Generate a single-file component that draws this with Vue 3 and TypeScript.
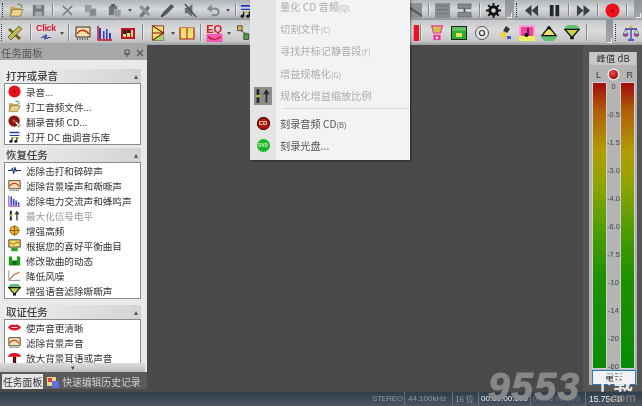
<script setup lang="ts">
type Tool = { k: string; w: number; icon?: string; label?: string };

const i = (icon: string, w = 23, label?: string): Tool => ({ k: "btn", w, icon, label });
const sep = (w = 6): Tool => ({ k: "sep", w });
const dd = (w = 7): Tool => ({ k: "dd", w });
const grip = (w = 5): Tool => ({ k: "grip", w });
const tail = (w = 8): Tool => ({ k: "tail", w });
const gap = (w: number): Tool => ({ k: "gap", w });

const toolbars: Tool[][][] = [
  [
    [
      grip(5), i("open", 22), i("save"), sep(5), i("cut", 24), i("copy"), i("paste", 25), dd(6),
      i("tool"), i("pen"), i("mute"), i("undo", 22), dd(8), sep(6), i("list", 17),
    ],
    [
      i("clip", 12), gap(5), sep(6), gap(3), i("panel1", 17), gap(5), i("panel2", 17), gap(3), sep(6), i("gear", 22),
      gap(1), tail(9), grip(5), i("rew", 25), i("pause", 21), sep(7), i("ff", 22), sep(7), i("rec", 22),
      sep(7), gap(4), tail(8),
    ],
  ],
  [
    [
      grip(4), i("wand", 22), sep(8), i("click", 24, "Click"), dd(7), sep(7), i("noise", 22), i("bars", 22), i("bars2", 23),
      sep(7), i("fold", 23), dd(8), i("fold2", 20), sep(6), i("eq", 22, "EQ"), dd(7), i("chain", 21),
    ],
    [
      i("redbar", 6), sep(12), i("blender", 22), i("image", 22), i("disc", 23), i("brush", 23), i("music", 22),
      i("up", 22), i("down", 23), sep(6), gap(17), tail(7), grip(5), gap(2), i("scale", 22),
    ],
  ],
];

const sections = [
  { title: "打开或录音", rows: [
    { icon: "rec", text: "录音..." },
    { icon: "open", text: "打工音频文件..." },
    { icon: "rip", text: "翻录音频 CD..." },
    { icon: "list", text: "打开 DC 曲调音乐库" },
  ] },
  { title: "恢复任务", rows: [
    { icon: "tick", text: "滤除击打和碎碎声" },
    { icon: "noise", text: "滤除背景噪声和嘶嘶声" },
    { icon: "hum", text: "滤除电力交流声和蜂鸣声" },
    { icon: "max", text: "最大化信号电平", off: true },
    { icon: "high", text: "增强高频" },
    { icon: "match", text: "根据您的喜好平衡曲目" },
    { icon: "dyn", text: "修改歌曲的动态" },
    { icon: "wind", text: "降低风噪" },
    { icon: "down", text: "增强语音滤除嘶嘶声" },
  ] },
  { title: "取证任务", rows: [
    { icon: "lips", text: "使声音更清晰" },
    { icon: "noise", text: "滤除背景声音" },
    { icon: "shroom", text: "放大背景耳语或声音" },
  ] },
];

const menu = [
  { text: "量化 CD 音频", key: "(Q)", off: true },
  { text: "切割文件", key: "(C)", off: true },
  { text: "寻找并标记静音段", key: "(F)", off: true },
  { text: "增益规格化", key: "(G)", off: true },
  { text: "规格化增益缩放比例", key: "", off: true, icon: "max" },
  { sep: true, text: "", key: "" },
  { text: "刻录音频 CD", key: "(B)", badge: "CD" },
  { text: "刻录光盘...", key: "", badge: "DVD" },
];

const scale = ["0", "-0.5", "-1.5", "-3.0", "-4.0", "-6.0", "-7.5", "-10", "-14", "-20", "-60"];
</script>

<template>
  <div class="app">
    <svg class="defs" width="0" height="0">
      <symbol id="open" viewBox="0 0 16 16"><path d="M1 4h5l1 1h6v2H5L2 13H1z" fill="#c9a45a"/><path d="M4 7h11l-3 7H1z" fill="#ecd48e" stroke="#6b5a30" stroke-width=".7"/><path d="M9 1l4 1 1 3" fill="none" stroke="#3f8a3f" stroke-width="1.2"/></symbol>
      <symbol id="save" viewBox="0 0 16 16"><path d="M2 2h12v12H2z" fill="#75787b"/><path d="M5 2h6v4H5zM4 9h8v5H4z" fill="#a4a7aa"/></symbol>
      <symbol id="cut" viewBox="0 0 16 16"><path d="M3 3l10 10M13 3L3 13" stroke="#7c8084" stroke-width="1.7"/></symbol>
      <symbol id="copy" viewBox="0 0 16 16"><path d="M2 2h7v8H2z" fill="#9a9ea2"/><path d="M7 6h7v8H7z" fill="#86898d" stroke="#b6b9bc" stroke-width=".6"/></symbol>
      <symbol id="paste" viewBox="0 0 16 16"><path d="M2 3h9v10H2z" fill="#73777b"/><path d="M4.500 1h4v3h-4z" fill="#56595c"/><path d="M8 7h7v8H8z" fill="#989ca0" stroke="#c0c2c4" stroke-width=".6"/></symbol>
      <symbol id="tool" viewBox="0 0 16 16"><path d="M2 14L11 3l3 2-8 10z" fill="#70757a"/><path d="M2 5l3-3 9 10-2 2z" fill="#8f9397"/></symbol>
      <symbol id="pen" viewBox="0 0 16 16"><path d="M1 15l2-5 9-9 3 3-9 9z" fill="#55595d"/><path d="M1 15l1-3 2 2z" fill="#222"/></symbol>
      <symbol id="mute" viewBox="0 0 16 16"><path d="M2 5h3l5-4v14l-5-4H2z" fill="#6b6f73"/><path d="M2 1l12 14" stroke="#4b4e52" stroke-width="1.500"/></symbol>
      <symbol id="undo" viewBox="0 0 16 16"><path d="M3 6h7a3 3 0 0 1 0 7H6" fill="none" stroke="#84888c" stroke-width="2.200"/><path d="M6 1v9L1 6z" fill="#84888c"/></symbol>
      <symbol id="list" viewBox="0 0 16 16"><path d="M2 2h12v2H2zM2 6h12v1.500H2z" fill="#2438c8"/><path d="M6 9h8v1.500H6" fill="#d6c23a"/><path d="M5 9v5M11 9v5" stroke="#111" stroke-width="1.300"/><circle cx="3.500" cy="14" r="1.800" fill="#111"/><circle cx="9.500" cy="14" r="1.800" fill="#111"/></symbol>
      <symbol id="clip" viewBox="0 0 16 16"><path d="M0 0h16v16H0z" fill="#8d9093"/><path d="M0 2l16 10v3L0 5z" fill="#5b5e61"/></symbol>
      <symbol id="panel1" viewBox="0 0 16 16"><path d="M0 0h16v16H0z" fill="#8a8d90"/><path d="M2 3h12M2 7h12M2 11h12" stroke="#6d7073"/></symbol>
      <symbol id="panel2" viewBox="0 0 16 16"><path d="M1 1h14v5H1zM1 10h14v5H1z" fill="#85888b" stroke="#5c5f62" stroke-width=".7"/><path d="M8 6v4" stroke="#55585b" stroke-width="2"/></symbol>
      <symbol id="gear" viewBox="0 0 16 16"><circle cx="8" cy="8" r="4" fill="none" stroke="#111" stroke-width="3"/><path d="M8 0v16M0 8h16M2.300 2.300l11.400 11.400M13.700 2.300L2.300 13.700" stroke="#111" stroke-width="2" stroke-dasharray="3 10"/></symbol>
      <symbol id="rew" viewBox="0 0 16 16"><path d="M8 2v12L1 8zM15 2v12L8 8z" fill="#3c4045"/></symbol>
      <symbol id="pause" viewBox="0 0 16 16"><path d="M3 2h4v12H3zM9 2h4v12H9z" fill="#23262a"/></symbol>
      <symbol id="ff" viewBox="0 0 16 16"><path d="M1 2v12l7-6zM8 2v12l7-6z" fill="#3c4045"/></symbol>
      <symbol id="rec" viewBox="0 0 16 16"><circle cx="8" cy="8" r="7.500" fill="#ee0f1c"/><circle cx="8" cy="8" r="1.300" fill="#8b0a12"/></symbol>
      <symbol id="wand" viewBox="0 0 16 16"><path d="M3 3l11 10-2 2L1 5z" fill="#6a6428"/><path d="M1 12L12 1l3 3L4 15z" fill="#c3b84e" stroke="#4f4a20" stroke-width=".7"/></symbol>
      <symbol id="click" viewBox="0 0 22 18"><path d="M0 9h4l2-4 2 8 2-10 2 9 2-3h6" fill="none" stroke="#1b2a9c" stroke-width="1.700"/></symbol>
      <symbol id="noise" viewBox="0 0 16 16"><path d="M1 2h14v10H1z" fill="#f2dfae" stroke="#3a3020"/><path d="M2 9c3-5 8-5 12 0" fill="none" stroke="#d03020" stroke-width="1.300"/><path d="M2 14h12" stroke="#333" stroke-dasharray="1 1.500" stroke-width="1.500"/></symbol>
      <symbol id="bars" viewBox="0 0 16 16"><path d="M2 14V3h2v11zM6 14V6h1.500v8zM9 14V4h1.500v10zM12 14V8h2v6z" fill="#3838c0"/><path d="M1 1v14h14" fill="none" stroke="#c01420" stroke-width="1.400"/></symbol>
      <symbol id="bars2" viewBox="0 0 16 16"><path d="M1 3h14v11H1z" fill="#c01420"/><path d="M3 5h3v7H3zM7 5h3v7H7zM11 5h2v7h-2z" fill="#e8d890"/><path d="M3 5h3v4H3zM7 5h3v3H7z" fill="#222"/></symbol>
      <symbol id="fold" viewBox="0 0 16 20"><path d="M1 1h14v18H1z" fill="#f0e070" stroke="#7a2010"/><path d="M1 19l14-9v9z" fill="#a8d070"/><path d="M1 10h14M1 19L15 10 1 1" fill="none" stroke="#7a2010" stroke-width="1.300"/></symbol>
      <symbol id="fold2" viewBox="0 0 16 16"><path d="M1 3h14v11H1z" fill="#f0e070" stroke="#b02018" stroke-width="1.200"/><path d="M1 3l7 5 7-5" fill="#e8d860"/><path d="M8 3v11" stroke="#b02018"/></symbol>
      <symbol id="eq" viewBox="0 0 18 9"><path d="M0 0h18v9H0z" fill="#ff58b0"/><path d="M2 3c3 4 10 4 14 0" fill="none" stroke="#b01020" stroke-width="1.200"/></symbol>
      <symbol id="chain" viewBox="0 0 16 20"><path d="M1 1h6v6H1z" fill="#e0b050" stroke="#333"/><path d="M9 11h6v7H9z" fill="#50a040" stroke="#333"/><path d="M5 7l7 4" stroke="#333"/></symbol>
      <symbol id="redbar" viewBox="0 0 6 16" preserveAspectRatio="none"><path d="M0 0h2v16H0zM4 0h2v16H4z" fill="#ee1020"/></symbol>
      <symbol id="blender" viewBox="0 0 16 18"><path d="M2 1h12l-2 8H4z" fill="#d0c050" stroke="#f03090" stroke-width="1.200"/><path d="M4 11h8v6H4z" fill="#ff2a90"/><circle cx="8" cy="14.500" r="1.500" fill="#fff"/></symbol>
      <symbol id="image" viewBox="0 0 16 14"><path d="M0 0h16v14H0z" fill="#222"/><path d="M1 1h14v12H1z" fill="#28b028"/><path d="M1 1h14v4H1z" fill="#60c060"/><path d="M5 7h6v4H5z" fill="#e8e070"/></symbol>
      <symbol id="disc" viewBox="0 0 16 16"><circle cx="8" cy="8" r="6.500" fill="#e4e4e4" stroke="#555"/><circle cx="8" cy="8" r="2.500" fill="#fff" stroke="#333" stroke-width="1.200"/></symbol>
      <symbol id="brush" viewBox="0 0 16 16"><path d="M9 1l4 3-3 4-4-2z" fill="#333"/><path d="M6 6l4 2-2 6-6-3z" fill="#e8d050"/><path d="M10 11h4v3h-4z" fill="#5058d0"/></symbol>
      <symbol id="music" viewBox="0 0 16 16"><path d="M0 0h16v16H0z" fill="#f0f060"/><path d="M0 0h16v11H0z" fill="#f0a0d0"/><path d="M2 2h12v9H2z" fill="#f040a0"/><path d="M9 3v7" stroke="#111" stroke-width="1.300"/><circle cx="7.500" cy="10" r="2" fill="#111"/></symbol>
      <symbol id="up" viewBox="0 0 18 16"><path d="M0 11a9 7 0 0 0 18 0z" fill="#60c070"/><path d="M9 1L1 11h16z" fill="#f0e070" stroke="#111" stroke-width="1.500"/><path d="M7 1h4v3H7z" fill="#111"/><path d="M6 11h6" stroke="#111"/></symbol>
      <symbol id="down" viewBox="0 0 18 16"><path d="M0 5a9 7 0 0 1 18 0z" fill="#60c070"/><path d="M1 4h16L9 13z" fill="#c8d050" stroke="#111" stroke-width="1.500"/><path d="M7 12h4v3H7z" fill="#111"/></symbol>
      <symbol id="scale" viewBox="0 0 16 16"><path d="M8 1v13M2 4h12M5 15h6" stroke="#3038b0" stroke-width="1.300"/><path d="M0 9a2.500 2.500 0 0 0 5 0zM11 9a2.500 2.500 0 0 0 5 0z" fill="#d04070" stroke="#3038b0" stroke-width=".6"/><path d="M2.500 4L0 9M2.500 4L5 9M13.500 4L11 9M13.500 4L16 9" stroke="#333" stroke-width=".5"/><circle cx="8" cy="2" r="1.500" fill="#e0b030"/></symbol>
      <symbol id="rip" viewBox="0 0 16 16"><circle cx="7.500" cy="7.500" r="7" fill="#8b1510"/><circle cx="7.500" cy="7.500" r="2" fill="#d05040"/><path d="M8 9l3-1 4 5-2 2z" fill="#f6e9c8" stroke="#222" stroke-width=".7"/></symbol>
      <symbol id="tick" viewBox="0 0 16 16"><path d="M0 8h4l1.500-2.500L7 12l1.500-8L10 9l1-1h5" fill="none" stroke="#122a80" stroke-width="1.300"/></symbol>
      <symbol id="hum" viewBox="0 0 16 16"><path d="M3 14V3h2v11zM6 14V6h2v8zM9 14V8h2v6zM12 14V10h2v4z" fill="#4040c8"/><path d="M1 2v13h14" fill="none" stroke="#9030a0" stroke-width="1.200"/></symbol>
      <symbol id="max" viewBox="0 0 16 16"><path d="M3.500 2v5M3.500 9v5" stroke="#2a2a2a" stroke-width="2.500"/><path d="M11 14V6" stroke="#2a2a2a" stroke-width="1.500"/><path d="M8 6.500L11 2l3 4.500z" fill="#2a2a2a"/><path d="M1.500 8h4" stroke="#d8c030" stroke-width="1.500"/></symbol>
      <symbol id="high" viewBox="0 0 16 16"><circle cx="8" cy="8" r="5.500" fill="#e8b020" stroke="#805010"/><path d="M2 8h12M8 2v12" stroke="#805010"/></symbol>
      <symbol id="match" viewBox="0 0 16 16"><path d="M1 1h14v9H1z" fill="#e8e060" stroke="#222"/><path d="M2 6c3-3 4 2 6 0s4-3 6-1" fill="none" stroke="#c02020"/><path d="M4 11h8v4H4z" fill="#30a030"/></symbol>
      <symbol id="dyn" viewBox="0 0 16 16"><path d="M1 3h4v11H1zM11 3h4v11h-4z" fill="#18a018"/><path d="M5 8h6v6H5z" fill="#106810"/></symbol>
      <symbol id="wind" viewBox="0 0 16 16"><path d="M1 2v12h14" fill="none" stroke="#777"/><path d="M2 13l5-6 7-3" fill="none" stroke="#c06020" stroke-width="1.300"/></symbol>
      <symbol id="lips" viewBox="0 0 16 16"><path d="M0 8c4-5 5-4 8-3 3-1 4-2 8 3-4 5-12 5-16 0z" fill="#e01020"/><path d="M4 8h8" stroke="#fff" stroke-width="1"/></symbol>
      <symbol id="shroom" viewBox="0 0 16 16"><path d="M0 7c1-6 15-6 16 0z" fill="#e01020"/><path d="M6 7h4v8H6z" fill="#601010"/></symbol>
    </svg>

    <div v-for="(bar, b) in toolbars" :key="b" class="bar" :class="b ? 'bar-low' : 'bar-top'">
      <div v-for="(group, g) in bar" :key="g" class="group">
        <span v-for="(t, n) in group" :key="n" :class="t.k" :style="{ width: t.w + 'px' }">
          <em v-if="t.label" :class="'lbl-' + t.icon">{{ t.label }}</em>
          <svg v-if="t.icon" :class="'ico-' + t.icon"><use :href="'#' + t.icon" /></svg>
        </span>
      </div>
    </div>

    <div class="work">
      <aside class="panel">
        <div class="panel-title">
          <span>任务面板</span>
          <span class="panel-btns">
            <svg viewBox="0 0 8 8"><path d="M2 1h4v4H2zM1 5h6M4 5v3" fill="none" stroke="#555" /></svg>
            <svg viewBox="0 0 8 8"><path d="M1 1l6 6M7 1L1 7" stroke="#555" stroke-width="1.200" /></svg>
          </span>
        </div>
        <div class="tasks">
          <section v-for="s in sections" :key="s.title" class="sec">
            <h3>{{ s.title }}<b>▴</b></h3>
            <ul>
              <li v-for="r in s.rows" :key="r.text" :class="{ off: r.off }">
                <svg><use :href="'#' + r.icon" /></svg>{{ r.text }}
              </li>
            </ul>
          </section>
        </div>
        <div class="more">▾</div>
        <div class="tabs">
          <span class="tab on">任务面板</span>
          <span class="tab"><svg viewBox="0 0 12 12"><path d="M0 1h9v9H0z" fill="#e8d880"/><path d="M1 2h4v4H1z" fill="#e04040"/><path d="M5 5h7v7H5z" fill="#6070e0"/></svg>快速编辑历史记录</span>
        </div>
      </aside>

      <main class="stage"></main>

      <div class="meter-wrap">
        <div class="meter">
          <div class="meter-head">峰值 dB</div>
          <div class="lr"><span>L</span><i class="led"></i><span>R</span></div>
          <div class="channels">
            <div class="chan"></div>
            <div class="ticks"><span v-for="s in scale" :key="s">{{ s }}</span></div>
            <div class="chan"></div>
          </div>
          <button class="reset">重置</button>
        </div>
      </div>
    </div>

    <footer class="status">
      <span class="s1">STEREO</span>
      <span class="s2">44.100kHz</span>
      <span class="s3">16 位</span>
      <span class="s4">00:00:00.000</span>
      <span class="s5">00:00:00.000</span>
      <span class="s6">15.75GB</span>
    </footer>

    <div class="menu">
      <template v-for="(m, n) in menu" :key="n">
        <div v-if="m.sep" class="menu-sep"></div>
        <div v-else class="menu-row" :class="{ off: m.off, 'with-box': m.icon === 'max' }">
          <span class="menu-ico">
            <svg v-if="m.icon"><use :href="'#' + m.icon" /></svg>
            <i v-if="m.badge" class="badge" :class="'badge-' + m.badge">{{ m.badge }}</i>
          </span>
          <span>{{ m.text }}<small>{{ m.key }}</small></span>
        </div>
      </template>
    </div>

    <div class="mark"><em>9553</em><b>下载</b><u>.com</u></div>
  </div>
</template>

<style>
html, body { margin: 0; background: #4a4a4a; overflow: hidden; }
</style>

<style scoped>
.app {
  position: relative;
  width: 642px;
  height: 406px;
  display: flex;
  flex-direction: column;
  overflow: hidden;
  background: #4a4a4a;
  font-family: "Noto Sans CJK SC", "Liberation Sans", sans-serif;
  filter: blur(0.35px);
}
.defs { position: absolute; }
.bar { display: flex; justify-content: space-between; flex: none; }
.bar-top { height: 20px; background: linear-gradient(#b0b4b8, #d6d8da 45%, #bdc0c3 80%, #8e9195); }
.bar-low { height: 25px; background: linear-gradient(#c5c7c9, #dadbdc 40%, #c4c6c8 85%, #9a9da0); }
.group { display: flex; align-items: center; height: 100%; }
.group > span { flex: none; display: flex; flex-direction: column; justify-content: center; align-items: center; height: 100%; box-sizing: border-box; }
.btn svg { width: 15px; height: 15px; }
.bar-low .btn svg { width: 16px; height: 16px; }
.btn em { font: 700 9px/9px "Liberation Sans", sans-serif; letter-spacing: -.3px; }
.btn .lbl-click { color: #e01830; }
.btn .lbl-eq { color: #e01820; font-size: 11px; line-height: 10px; }
.bar-low .btn .ico-click { width: 17px; height: 9px; }
.bar-low .btn .ico-eq { width: 17px; height: 8px; }
.sep::after { content: ""; width: 1px; height: 70%; background: #85888b; box-shadow: 1px 0 #e4e5e6; }
.dd::after { content: ""; border: 2px solid transparent; border-top: 3px solid #555; margin-top: 3px; }
.grip::after { content: ""; width: 1px; height: 70%; border-left: 1px dotted #30333a; }
.group > .tail { background: linear-gradient(#8f9397, #a6a9ac); justify-content: flex-end; padding-bottom: 2px; }
.tail::after { content: ""; width: 4px; height: 4px; border-bottom: 1px solid #eee; border-right: 1px solid #eee; }

.work { flex: 1; display: flex; min-height: 0; }
.panel { width: 147px; flex: none; height: 344px; background: #e9e9e9; display: flex; flex-direction: column; box-shadow: 1px 0 #777; }
.panel-title { height: 15px; flex: none; background: #a8a8a8; color: #565656; font-size: 10.400px; line-height: 15px; padding: 0 3px 0 1px; display: flex; justify-content: space-between; }
.panel-btns { display: flex; align-items: center; gap: 5px; }
.panel-btns svg { width: 8px; height: 8px; }
.tasks { height: 303px; flex: none; overflow: hidden; padding-top: 9px; box-sizing: border-box; }
.sec { margin: 0 6px 3px 4px; }
.sec + .sec + .sec { margin-top: 6px; }
h3 { margin: 0; height: 14px; line-height: 14px; font-size: 10.400px; font-weight: 500; color: #3c3c3c; padding: 0 3px 0 2px; background: linear-gradient(90deg, #eeeeee, #d4d4d4); display: flex; justify-content: space-between; }
h3 b { font-size: 8px; font-weight: 400; color: #555; }
ul { margin: 0; padding: 0; list-style: none; background: #fff; border: 1px solid #8a8a8a; }
li { height: 15px; display: flex; align-items: center; gap: 5px; padding-left: 3px; font-size: 9.600px; color: #333; white-space: nowrap; }
li svg { width: 13px; height: 13px; flex: none; }
li.off { color: #9a9a9a; }
.more { height: 9px; flex: none; background: linear-gradient(#dcdcdc, #bdbdbd); margin: 0 2px 0 0; font-size: 7px; line-height: 9px; text-align: center; color: #444; }
.tabs { flex: 1; display: flex; background: #5a5a5a; padding-top: 2px; gap: 3px; }
.tab { height: 15px; display: flex; align-items: center; gap: 3px; font-size: 9.800px; color: #cfcfcf; white-space: nowrap; padding: 0 1px; }
.tab svg { width: 12px; height: 12px; }
.tab.on { background: #e4e4e4; color: #333; margin-left: 2px; }

.stage { flex: 1; background: #4a4a4a; }
.meter-wrap { flex: none; width: 59px; background: #545454; margin-bottom: 1px; padding: 7px 5px 0 6px; box-sizing: border-box; }
.meter { height: 333px; background: #b4b4b4; padding: 0 1px; }
.meter-head { height: 13px; background: #c8c8c8; text-align: center; font-size: 9.500px; line-height: 13px; color: #333; margin-bottom: 1px; }
.lr { display: flex; justify-content: space-between; align-items: center; height: 17px; padding: 0 3px 0 6px; font-family: "Liberation Sans", sans-serif; font-size: 9px; color: #333; }
.led { width: 9px; height: 9px; border-radius: 50%; background: radial-gradient(circle at 40% 35%, #f05050, #a00c0c 70%); box-shadow: 0 0 0 1.500px #e8e8e8; }
.channels { display: flex; height: 285px; padding: 0 2px 0 3px; margin-bottom: 2px; }
.chan { width: 13px; background: linear-gradient(#a30c0c, #b0600a 10%, #b29c00 24%, #8ea400 36%, #4e9c00 52%, #1f9100 68%, #098a08); box-shadow: 0 0 0 1px #d0d0d0; }
.ticks { flex: 1; height: 288px; display: flex; flex-direction: column; justify-content: space-between; align-items: center; font-family: "Liberation Sans", sans-serif; font-size: 7.500px; line-height: 8px; color: #444; }
.reset { display: block; width: 44px; height: 15px; margin-left: 2px; padding: 0; border: 1.500px solid #2a78c0; background: #eef2f4; font-size: 9px; line-height: 11px; color: #222; font-family: inherit; }

.status { flex: none; height: 14px; background: linear-gradient(#2e3d4c, #4e5660); display: flex; font-family: "Liberation Sans", sans-serif; font-size: 8px; line-height: 14px; color: #8f979f; padding-left: 372px; box-sizing: border-box; white-space: nowrap; }
.status span { border-right: 1px solid #6a7078; }
.s1 { width: 32px; letter-spacing: -.4px; }
.s2 { width: 44px; margin-left: 3px; }
.s3 { width: 23px; margin-left: 2px; font-family: "Noto Sans CJK SC", sans-serif; }
.s4 { width: 49px; color: #f0f0f0; margin-left: 2px; }
.s5 { width: 52px; color: #6c747e; margin-left: 2px; }
.s6 { margin-left: 3px; color: #f0f0f0; border: 0 !important; font-size: 8.500px; }

.menu { position: absolute; left: 250px; top: -5px; width: 160px; height: 165px; background: linear-gradient(90deg, #e4e4e4 26px, #f3f3f3 26px); box-shadow: 1px 1px 2px rgba(0, 0, 0, .45); font-size: 10.200px; }
.menu-row { height: 22.400px; display: flex; align-items: center; color: #555; white-space: nowrap; gap: 4px; }
.menu-row.off { color: #adadad; }
.menu-row small { font-size: 7.500px; }
.menu-ico { width: 26px; height: 22px; flex: none; display: flex; justify-content: center; align-items: center; }
.menu-ico svg { width: 13px; height: 13px; }
.with-box .menu-ico svg { width: 18px; height: 18px; background: #8c8c8c; }
.menu-sep { height: 1px; margin: 1px 1px 3px 33px; background: #d4d4d4; }
.badge { width: 13px; height: 13px; border-radius: 50%; display: flex; justify-content: center; align-items: center; font: 700 6px/13px "Liberation Sans", sans-serif; overflow: hidden; }
.badge-CD { background: #a81810; color: #f4e6c0; box-shadow: 0 0 0 1px #3a0a08 inset; }
.badge-DVD { background: #18b828; color: #d8f8d0; font-size: 4.500px; }

.mark { position: absolute; left: 488px; top: 368px; width: 154px; height: 38px; color: #8b8b8b; pointer-events: none; }
.mark em { position: absolute; left: 0; top: 0; font: italic 700 39px/38px "Liberation Sans", sans-serif; letter-spacing: 1.500px; -webkit-text-stroke: 1px #8b8b8b; opacity: .95; }
.mark b { position: absolute; left: 105px; top: 3px; font-size: 20px; line-height: 22px; color: #f2f4f5; font-weight: 700; opacity: .9; }
.mark u { position: absolute; left: 120px; top: 24px; text-decoration: none; font: 700 12px/13px "Liberation Sans", sans-serif; color: #777; }
</style>
